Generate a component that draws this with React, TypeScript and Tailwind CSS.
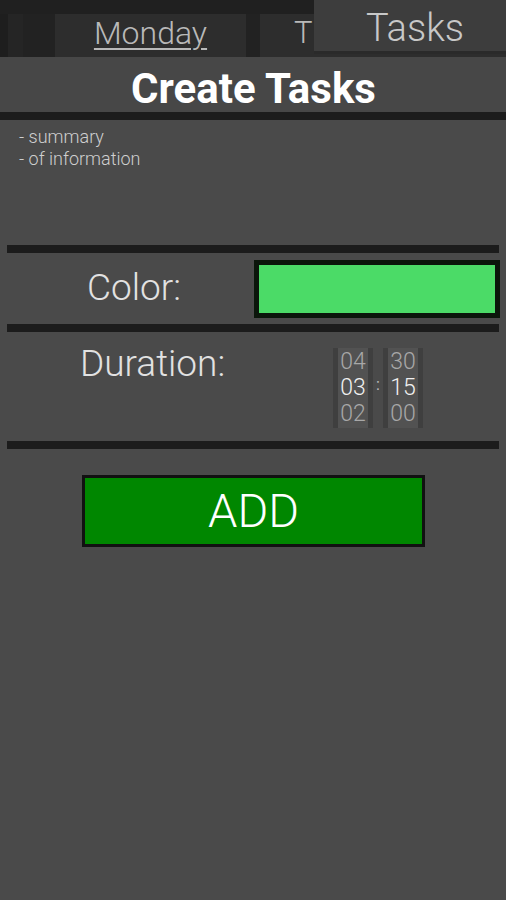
const font = { fontFamily: "Roboto, 'Open Sans', sans-serif" };

const Bar = () => <div className="mx-[7px] h-[8px] bg-[#1c1c1c]" />;

const Wheel = ({ values }: { values: string[] }) => (
  <div className="flex w-[40px] flex-col items-center border-x-[5px] border-[#3f3f3f] bg-[#525252] py-[1px] text-[23px] leading-[26px] font-light">
    {values.map((v, i) => (
      <span key={v} className={i === 1 ? "text-[#f0f0f0]" : "text-[#a8a8a8]"}>
        {v}
      </span>
    ))}
  </div>
);

export default function App() {
  return (
    <div className="relative h-[900px] w-[506px] overflow-hidden bg-[#4a4a4a]" style={font}>
      {/* day header */}
      <div className="flex h-[57px] bg-[#202020] pt-[14px]">
        <div className="w-[8px] bg-[#1e1e1e]" />
        <div className="w-[15px] bg-[#252525]" />
        <div className="w-[32px] bg-[#222222]" />
        <div className="flex h-[43px] w-[191px] flex-col items-center overflow-hidden bg-[#2d2d2d] text-[#b9b9b9]">
          <span className="text-[32px] leading-[38px] underline decoration-[2px] underline-offset-[4px] font-light">Monday</span>
          <span className="mt-[2px] text-[14px] leading-[18px]">3/18</span>
        </div>
        <div className="w-[14px] bg-[#222222]" />
        <div className="flex-1 bg-[#2d2d2d] pl-[34px] pt-[1px] text-[31px] leading-[36px] text-[#b9b9b9] font-light">T</div>
      </div>

      {/* tasks tab overlaying the header */}
      <div className="absolute right-0 top-0 flex h-[54px] w-[192px] items-center justify-center border-b-[3px] border-[#2a2a2a] bg-[#3d3d3d] text-[38px] font-light text-[#c8c8c8]">
        <span className="ml-[10px] mt-[6px]">Tasks</span>
      </div>

      {/* title */}
      <div className="flex h-[55px] items-center justify-center bg-[#474747] pl-[1px] pt-[8px] text-[42px] font-bold text-white">
        Create Tasks
      </div>
      <div className="h-[8px] bg-[#1c1c1c]" />

      {/* summary */}
      <div className="h-[125px] px-[19px] pt-[6px] text-[18px] leading-[22px] font-light text-[#cfcfcf]">
        <div>- summary</div>
        <div>- of information</div>
      </div>

      <Bar />

      {/* color */}
      <div className="flex h-[71px] items-center">
        <div className="w-[254px] pl-[87px] pb-[1px] text-[37px] font-light text-[#e2e2e2]">Color:</div>
        <div className="h-[58px] w-[246px] border-[5px] border-[#0b160b] bg-[#4bdb67]" />
      </div>

      <Bar />

      {/* duration */}
      <div className="flex h-[109px]">
        <div className="w-[333px] pl-[80px] pt-[4px] text-[37px] font-light text-[#e2e2e2]">Duration:</div>
        <div className="flex items-start pt-[16px]">
          <Wheel values={["04", "03", "02"]} />
          <div className="flex w-[10px] justify-center pt-[27px] text-[16px] leading-[20px] text-[#bdbdbd]">:</div>
          <Wheel values={["30", "15", "00"]} />
        </div>
      </div>

      <Bar />

      {/* add button */}
      <div className="flex justify-center pl-[1px] pt-[26px]">
        <button className="flex h-[72px] w-[343px] items-center justify-center border-[3px] border-[#111111] bg-[#008700] text-[47px] font-light text-white">
          ADD
        </button>
      </div>
    </div>
  );
}
